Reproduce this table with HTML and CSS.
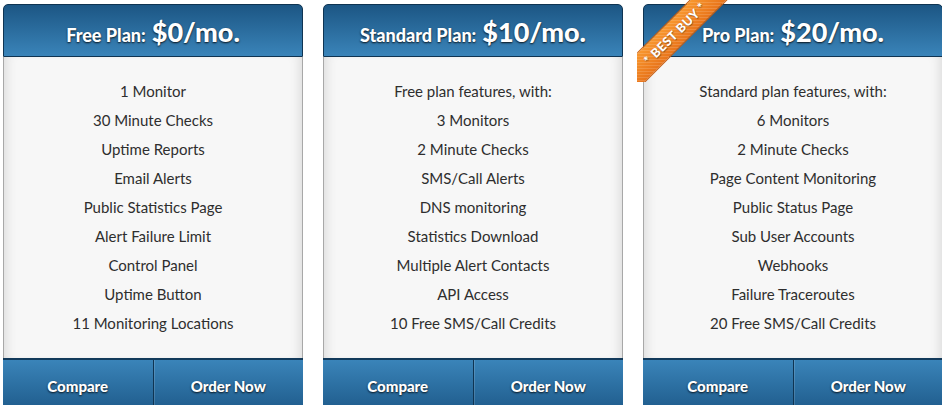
FILE: index.html
```html
<!DOCTYPE html>
<html>
<head>
<meta charset="utf-8">
<link rel="stylesheet" href="styles.css">
</head>
<body>
<div class="plans">
  <div class="plan">
    <div class="plan-head"><span class="name">Free Plan:</span> <span class="price">$0/mo.</span></div>
    <ul class="features">
      <li>1 Monitor</li>
      <li>30 Minute Checks</li>
      <li>Uptime Reports</li>
      <li>Email Alerts</li>
      <li>Public Statistics Page</li>
      <li>Alert Failure Limit</li>
      <li>Control Panel</li>
      <li>Uptime Button</li>
      <li>11 Monitoring Locations</li>
    </ul>
    <div class="plan-foot"><a class="btn">Compare</a><a class="btn">Order Now</a></div>
  </div>
  <div class="plan">
    <div class="plan-head"><span class="name">Standard Plan:</span> <span class="price">$10/mo.</span></div>
    <ul class="features">
      <li>Free plan features, with:</li>
      <li>3 Monitors</li>
      <li>2 Minute Checks</li>
      <li>SMS/Call Alerts</li>
      <li>DNS monitoring</li>
      <li>Statistics Download</li>
      <li>Multiple Alert Contacts</li>
      <li>API Access</li>
      <li>10 Free SMS/Call Credits</li>
    </ul>
    <div class="plan-foot"><a class="btn">Compare</a><a class="btn">Order Now</a></div>
  </div>
  <div class="plan">
    <div class="ribbon-wrap"><div class="ribbon">* BEST BUY *</div></div>
    <div class="fold"></div>
    <div class="plan-head"><span class="name">Pro Plan:</span> <span class="price">$20/mo.</span></div>
    <ul class="features">
      <li>Standard plan features, with:</li>
      <li>6 Monitors</li>
      <li>2 Minute Checks</li>
      <li>Page Content Monitoring</li>
      <li>Public Status Page</li>
      <li>Sub User Accounts</li>
      <li>Webhooks</li>
      <li>Failure Traceroutes</li>
      <li>20 Free SMS/Call Credits</li>
    </ul>
    <div class="plan-foot"><a class="btn">Compare</a><a class="btn">Order Now</a></div>
  </div>
</div>
</body>
</html>
```

FILE: styles.css
```css
html, body {
  margin: 0;
  padding: 0;
  background: #fff;
  overflow: hidden;
}
body {
  font-family: Lato, "Open Sans", sans-serif;
  color: #2e2e2e;
}
.plans {
  display: flex;
  gap: 20px;
  padding: 4px 0 0 3px;
}
.plan {
  position: relative;
  width: 300px;
  flex: 0 0 300px;
}
.plan-head {
  height: 51px;
  border: 1px solid #0f3452;
  border-radius: 5px 5px 0 0;
  background: linear-gradient(#1c5684, #3a84b9);
  color: #fff;
  display: flex;
  align-items: baseline;
  justify-content: center;
  gap: 6px;
  line-height: 53px;
  text-shadow: 0 1px 2px rgba(0,0,0,.85);
  font-weight: 900;
}
.plan-head .name {
  font-size: 18px;
}
.plan-head .price {
  font-size: 27px;
}
.features {
  list-style: none;
  margin: 0;
  padding: 20px 0 20px;
  border-left: 1px solid #a8a8a8;
  border-right: 1px solid #a8a8a8;
  background: #f7f7f7;
  box-shadow: inset 10px 0 12px -8px rgba(0,0,0,.12), inset -10px 0 12px -8px rgba(0,0,0,.12);
  text-align: center;
  font-size: 15px;
}
.features li {
  height: 29px;
  line-height: 29px;
}
.plan-foot {
  display: flex;
  height: 50px;
  border-top: 2px solid #123a5b;
  background: linear-gradient(#3a84b9, #1f5c8c);
}
.btn {
  flex: 1;
  text-align: center;
  color: #fff;
  font-weight: 900;
  font-size: 15px;
  line-height: 52px;
  text-shadow: 0 1px 2px rgba(0,0,0,.85);
  cursor: pointer;
}
.btn + .btn {
  border-left: 1px solid #0f3452;
  box-shadow: inset 1px 0 0 rgba(255,255,255,.15);
}
.ribbon-wrap {
  position: absolute;
  left: -6px;
  top: -4px;
  width: 92px;
  height: 82px;
  overflow: hidden;
  z-index: 2;
}
.ribbon {
  position: absolute;
  left: -42px;
  top: 20px;
  width: 160px;
  height: 25px;
  line-height: 25px;
  transform: rotate(-45deg);
  background:
    repeating-linear-gradient(45deg, rgba(255,255,255,.14) 0 1px, transparent 1px 3px),
    linear-gradient(#f8972f, #e8741a);
  border-top: 1px solid #c65d10;
  border-bottom: 1px solid #c65d10;
  color: #fff;
  font-size: 12.5px;
  font-weight: 900;
  text-align: center;
  letter-spacing: .6px;
  text-shadow: 0 1px 1px rgba(0,0,0,.45);
}
.fold {
  position: absolute;
  left: -5px;
  top: 71px;
  width: 0;
  height: 0;
  border-top: 6px solid #4a2406;
  border-left: 5px solid transparent;
  z-index: 1;
}
```
